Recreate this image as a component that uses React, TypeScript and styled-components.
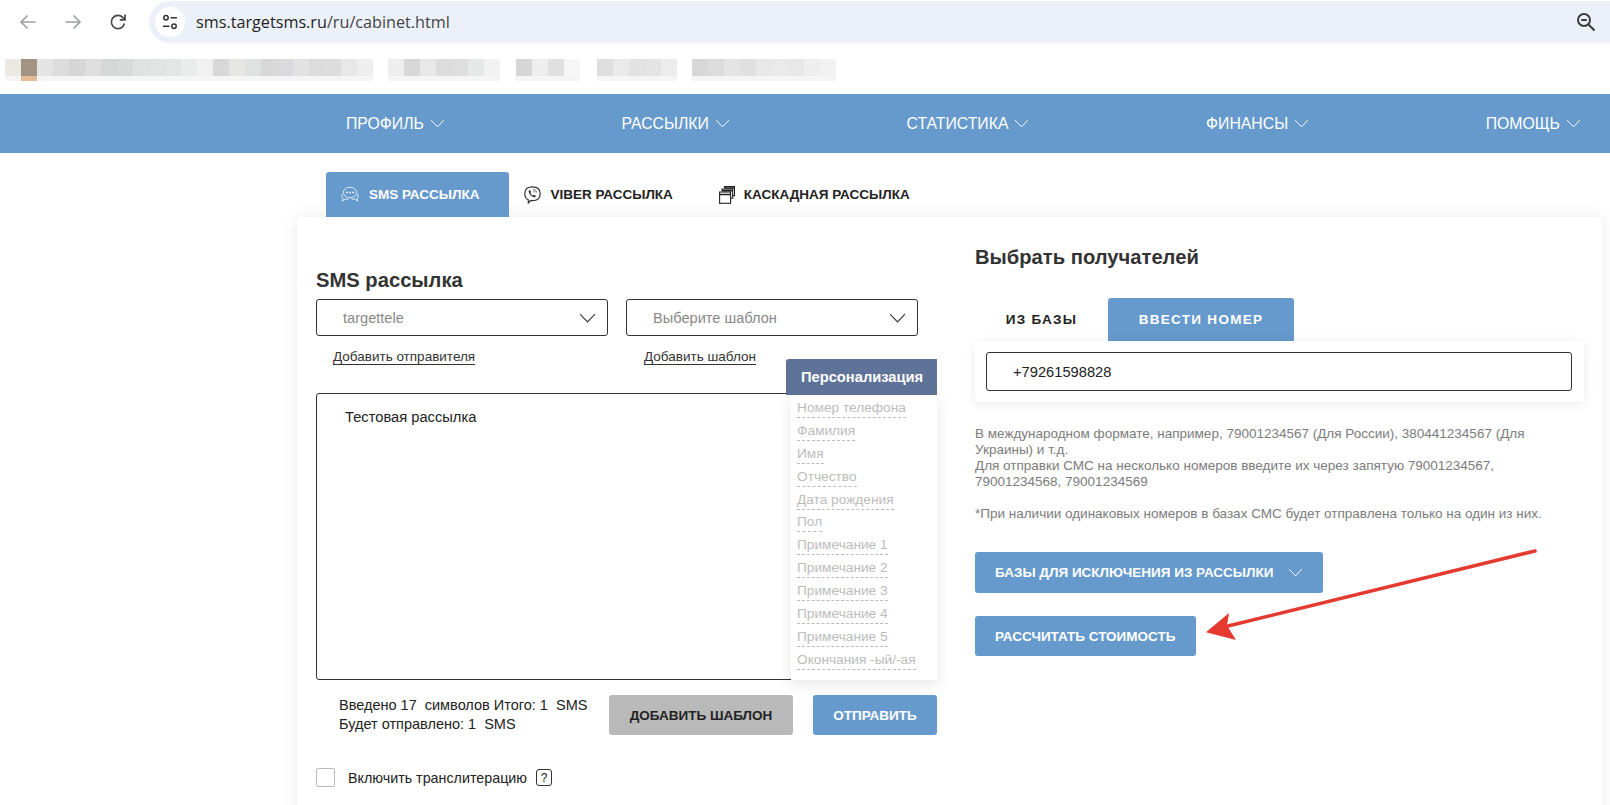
import React from "react";
import styled, {createGlobalStyle} from "styled-components";

const GlobalStyle = createGlobalStyle`
  html, body {
    margin: 0;
    padding: 0;
    height: 805px;
    overflow: hidden;
    background: #fff;
    font-family: "Liberation Sans", Arial, sans-serif;
    color: #333;
  }
  * { box-sizing: border-box; }
`;

const blurGroups = [
  {gap: 0, cells: ["#ece8e2", "#a39383", "#e4e4e4", "#dcdcdc", "#d6d6d6", "#dedede", "#d6d8d8", "#d8dada", "#e0e2e2", "#e2e4e4", "#e4e6e6", "#eaecec"]},
  {gap: 0, cells: ["#f1f1f1", "#d8d8d8", "#e6e6e4", "#e0e2e2", "#d8d8d8", "#dadade", "#e2e2e2", "#dcdcdc", "#dddddd", "#e8e8e8", "#eeeeee"]},
  {gap: 15, cells: ["#eeeeee", "#d8d8d8", "#e8e8e8", "#dcdcdc", "#dedede", "#e6e8e8", "#f2f2f2"]},
  {gap: 16, cells: ["#d6d6d6", "#eeeeee", "#e0e0e0", "#f6f6f6"]},
  {gap: 17, cells: ["#dedede", "#eaeaea", "#e2e2e2", "#e4e4e4", "#ececec"]},
  {gap: 15, cells: ["#d8d8d8", "#dcdcdc", "#e4e4e4", "#e0e0e0", "#e8e8e8", "#eaeaea", "#e8e8e8", "#eeeeee", "#f2f2f2"]},
];

const navItems = ["ПРОФИЛЬ", "РАССЫЛКИ", "СТАТИСТИКА", "ФИНАНСЫ", "ПОМОЩЬ"];

const personalFields = [
  "Номер телефона", "Фамилия", "Имя", "Отчество", "Дата рождения", "Пол",
  "Примечание 1", "Примечание 2", "Примечание 3", "Примечание 4", "Примечание 5",
  "Окончания -ый/-ая",
];

const Chevron = ({size = 15}: {size?: number}) => (
  <svg width={size} height={size * 0.6} viewBox="0 0 16 9.6" fill="none" stroke="currentColor" strokeWidth="1">
    <path d="M1 1l7 7.4L15 1"/>
  </svg>
);

const BackIcon = () => (
  <svg width="20" height="20" viewBox="0 0 20 20" fill="none" stroke="#9aa0a6" strokeWidth="1.6">
    <path d="M17.5 10H3M9.5 3.5L3 10l6.5 6.5"/>
  </svg>
);

const ForwardIcon = () => (
  <svg width="20" height="20" viewBox="0 0 20 20" fill="none" stroke="#9aa0a6" strokeWidth="1.6">
    <path d="M2.5 10H17M10.5 3.5L17 10l-6.5 6.5"/>
  </svg>
);

const ReloadIcon = () => (
  <svg width="20" height="20" viewBox="0 0 20 20" fill="none" stroke="#474747" strokeWidth="1.7">
    <path d="M16.4 11.5a6.6 6.6 0 1 1-1.5-5.900L17 7.700"/>
    <path d="M17 2.600v5.200h-5.200"/>
  </svg>
);

const TuneIcon = () => (
  <svg width="18" height="18" viewBox="0 0 18 18" fill="none" stroke="#333" strokeWidth="1.5">
    <circle cx="5" cy="4.800" r="2.200"/>
    <path d="M9.500 4.800H16M2 13.200h6.500"/>
    <circle cx="13" cy="13.200" r="2.200"/>
  </svg>
);

const ZoomOutIcon = () => (
  <svg width="20" height="20" viewBox="0 0 20 20" fill="none" stroke="#3c3c3c" strokeWidth="2">
    <circle cx="8" cy="8" r="6"/>
    <path d="M5.200 8h5.600M12.500 12.500l6 6"/>
  </svg>
);

const SmsIcon = () => (
  <svg width="18" height="17" viewBox="0 0 18 17" fill="none" stroke="#e8f0f8" strokeWidth="0.9">
    <path d="M1.900 7.800C.4 8.800.4 11.300 2 12.300l-.9 2.900 3.100-2.100c1.300.3 2.500.2 3.400-.2"/>
    <path d="M16.100 7.800c1.500 1 1.500 3.500-.1 4.500l.9 2.900-3.100-2.100c-1.300.3-2.500.2-3.400-.2"/>
    <ellipse cx="9" cy="6.500" rx="6.700" ry="5.300" fill="#6699cc"/>
    <circle cx="5.800" cy="6.500" r="1" fill="#e8f0f8" stroke="none"/>
    <circle cx="9" cy="6.500" r="1" fill="#e8f0f8" stroke="none"/>
    <circle cx="12.200" cy="6.500" r="1" fill="#e8f0f8" stroke="none"/>
  </svg>
);

const ViberIcon = () => (
  <svg width="17" height="18" viewBox="0 0 17 18" fill="none" stroke="#333" strokeWidth="1.2">
    <path d="M8.500 .8c4.500 0 7.700 1.700 7.700 6.900 0 5-3.200 6.900-7.700 6.900-.6 0-1.200 0-1.800-.1L4.300 17v-3.200C2 12.700.8 10.900.8 7.700.8 2.500 4 .8 8.500 .8z"/>
    <path d="M5.800 3.900l1.300 2-.7 1c.5 1.300 1.300 2.100 2.600 2.600l1-.8 2 1.300c-.3 1-1 1.400-1.800 1.300C7.300 10.800 5 8.500 4.600 5.600c0-.9.400-1.500 1.200-1.700z" fill="#333" stroke="none"/>
    <path d="M9.300 3.300c1.900.2 3 1.400 3.200 3.200M9.300 5c.8.100 1.300.6 1.400 1.400" strokeWidth="0.8"/>
  </svg>
);

const CascadeIcon = () => (
  <svg width="16" height="18" viewBox="0 0 16 18" fill="none" stroke="#222" strokeWidth="1.1">
    <path d="M5.500 2V.6h10v9h-1.800"/>
    <path d="M3 5V3h10.700v9.200H11.500"/>
    <rect x="0.600" y="6" width="11" height="11.300" fill="#fff"/>
    <path d="M.6 8.500h11M5.500 2h10M3 4.600h10.700" strokeWidth="1.700"/>
  </svg>
);

const Arrow = () => (
  <svg width="340" height="100" viewBox="0 0 340 100" fill="#e53a2f">
    <path d="M335 6L28 81" stroke="#e53a2f" strokeWidth="3.600" strokeLinecap="round"/>
    <path d="M6 87.300L29 68l-2 12.500L36 95z"/>
  </svg>
);

const App = () => (
  <Page>
    <GlobalStyle/>
    <Toolbar>
      <NavButton><BackIcon/></NavButton>
      <NavButton><ForwardIcon/></NavButton>
      <NavButton><ReloadIcon/></NavButton>
      <AddressBar>
        <TuneBadge><TuneIcon/></TuneBadge>
        <UrlText>sms.targetsms.ru<UrlPath>/ru/cabinet.html</UrlPath></UrlText>
        <ZoomButton><ZoomOutIcon/></ZoomButton>
      </AddressBar>
    </Toolbar>

    <BookmarkBar>
      {blurGroups.map((group, i) => (
        <BlurGroup key={i} $gap={group.gap}>
          {group.cells.map((color, j) => (
            <BlurCell key={j} $color={color} $under={color === "#a39383" ? "#e3bd96" : "#f5f5f5"}/>
          ))}
        </BlurGroup>
      ))}
    </BookmarkBar>

    <MainNav>
      {navItems.map(item => (
        <MainNavItem key={item}>{item}<Chevron/></MainNavItem>
      ))}
    </MainNav>

    <TabRow>
      <Tab $active><SmsIcon/>SMS РАССЫЛКА</Tab>
      <Tab><ViberIcon/>VIBER РАССЫЛКА</Tab>
      <Tab><CascadeIcon/>КАСКАДНАЯ РАССЫЛКА</Tab>
    </TabRow>

    <Card>
      <LeftColumn>
        <Title>SMS рассылка</Title>
        <SelectRow>
          <SelectBox><SelectValue>targettele</SelectValue><Chevron size={17}/></SelectBox>
          <SelectBox><SelectValue>Выберите шаблон</SelectValue><Chevron size={17}/></SelectBox>
        </SelectRow>
        <LinkRow>
          <ActionLink>Добавить отправителя</ActionLink>
          <ActionLink>Добавить шаблон</ActionLink>
        </LinkRow>
        <Editor>
          <MessageArea readOnly defaultValue="Тестовая рассылка"/>
          <PersonalPanel>
            <PersonalHeader>Персонализация</PersonalHeader>
            <PersonalList>
              {personalFields.map(field => <PersonalField key={field}>{field}</PersonalField>)}
            </PersonalList>
          </PersonalPanel>
        </Editor>
        <FooterRow>
          <Counter>
            <div>Введено 17&nbsp; символов Итого: 1&nbsp; SMS</div>
            <div>Будет отправлено: 1&nbsp; SMS</div>
          </Counter>
          <ActionButton $grey>ДОБАВИТЬ ШАБЛОН</ActionButton>
          <ActionButton>ОТПРАВИТЬ</ActionButton>
        </FooterRow>
        <TranslitRow>
          <CheckBox/>
          <span>Включить транслитерацию</span>
          <HelpMark>?</HelpMark>
        </TranslitRow>
      </LeftColumn>

      <RightColumn>
        <RightTitle>Выбрать получателей</RightTitle>
        <SourceTabs>
          <SourceTab>ИЗ БАЗЫ</SourceTab>
          <SourceTab $active>ВВЕСТИ НОМЕР</SourceTab>
        </SourceTabs>
        <PhonePanel>
          <PhoneInput readOnly value="+79261598828"/>
        </PhonePanel>
        <HelpText>
          В международном формате, например, 79001234567 (Для России), 380441234567 (Для Украины) и т.д.<br/>
          Для отправки СМС на несколько номеров введите их через запятую 79001234567, 79001234568, 79001234569<br/>
          <br/>
          *При наличии одинаковых номеров в базах СМС будет отправлена только на один из них.
        </HelpText>
        <ExcludeButton>БАЗЫ ДЛЯ ИСКЛЮЧЕНИЯ ИЗ РАССЫЛКИ<Chevron/></ExcludeButton>
        <PriceButton>РАССЧИТАТЬ СТОИМОСТЬ</PriceButton>
      </RightColumn>
    </Card>

    <ArrowLayer><Arrow/></ArrowLayer>
  </Page>
);

export default App;

const Page = styled.div`
  position: relative;
  width: 1610px;
  height: 805px;
  overflow: hidden;
  background: #fff;
`;

const Toolbar = styled.div`
  display: flex;
  align-items: center;
  height: 44px;
  padding: 1px 0 1px 18px;
`;

const NavButton = styled.div`
  display: flex;
  justify-content: center;
  align-items: center;
  width: 20px;
  height: 20px;
  margin-right: 25px;
`;

const AddressBar = styled.div`
  display: flex;
  align-items: center;
  flex: 1;
  height: 42px;
  margin-left: -4px;
  padding: 0 0 0 6px;
  background: #ecf1f9;
  border-radius: 21px 0 0 21px;
`;

const TuneBadge = styled.div`
  display: flex;
  justify-content: center;
  align-items: center;
  width: 30px;
  height: 30px;
  border-radius: 50%;
  background: #fff;
`;

const UrlText = styled.div`
  margin-left: 11px;
  font-family: "Open Sans", sans-serif;
  font-size: 16.200px;
  color: #1f1f1f;
`;

const UrlPath = styled.span`
  color: #444;
`;

const ZoomButton = styled.div`
  display: flex;
  margin-left: auto;
  margin-right: 14px;
`;

const BookmarkBar = styled.div`
  display: flex;
  align-items: flex-start;
  height: 50px;
  padding: 15px 0 0 5px;
  filter: blur(0.6px);
`;

const BlurGroup = styled.div<{$gap: number}>`
  display: flex;
  margin-left: ${p => p.$gap}px;
`;

const BlurCell = styled.div<{$color: string; $under: string}>`
  width: 16px;
  height: 22px;
  background: linear-gradient(${p => p.$color} 0 17px, ${p => p.$under} 17px);
`;

const MainNav = styled.nav`
  display: flex;
  justify-content: space-between;
  align-items: center;
  height: 59px;
  padding: 0 29px 0 346px;
  background: #6699cc;
`;

const MainNavItem = styled.div`
  display: flex;
  align-items: center;
  gap: 6px;
  font-size: 15.800px;
  color: #fff;
`;

const TabRow = styled.div`
  display: flex;
  align-items: flex-end;
  height: 64px;
  padding-left: 326px;
`;

const Tab = styled.div<{$active?: boolean}>`
  display: flex;
  align-items: center;
  gap: ${p => p.$active ? "10px" : "9px"};
  height: 45px;
  padding: 0 ${p => p.$active ? "30px" : "31px"} 0 15px;
  border-radius: 3px 3px 0 0;
  background: ${p => p.$active ? "#6699cc" : "transparent"};
  color: ${p => p.$active ? "#fff" : "#222"};
  font-size: 13.500px;
  font-weight: 700;
`;

const Card = styled.div`
  display: grid;
  grid-template-columns: 621px 609px;
  column-gap: 38px;
  height: 620px;
  margin: 0 8px 0 297px;
  padding: 0 18px 0 19px;
  border-radius: 4px;
  background: #fff;
  box-shadow: 0 0 16px rgba(0, 0, 0, 0.09);
`;

const LeftColumn = styled.div`
  padding-top: 51px;
`;

const Title = styled.h2`
  margin: 0;
  font-size: 20.200px;
  line-height: 24px;
  font-weight: 700;
  color: #333;
`;

const SelectRow = styled.div`
  display: grid;
  grid-template-columns: 292px 292px;
  column-gap: 18px;
  margin-top: 7px;
`;

const SelectBox = styled.div`
  display: flex;
  justify-content: space-between;
  align-items: center;
  height: 37px;
  padding: 1px 11px 0 26px;
  border: 1px solid #333;
  border-radius: 3px;
  color: #333;
`;

const SelectValue = styled.span`
  font-size: 14.600px;
  color: #888;
`;

const LinkRow = styled.div`
  display: grid;
  grid-template-columns: 311px 1fr;
  height: 19px;
  margin-top: 13px;
  padding-left: 17px;
`;

const ActionLink = styled.a`
  justify-self: start;
  height: 16px;
  font-size: 13.500px;
  line-height: 15px;
  color: #333;
  border-bottom: 1px solid #333;
`;

const Editor = styled.div`
  position: relative;
  margin-top: 25px;
`;

const MessageArea = styled.textarea`
  display: block;
  width: 100%;
  height: 287px;
  padding: 15px 28px;
  border: 1px solid #333;
  border-radius: 3px;
  outline: none;
  resize: none;
  font-family: "Liberation Sans", Arial, sans-serif;
  font-size: 14.700px;
  color: #222;
`;

const PersonalPanel = styled.div`
  position: absolute;
  top: -34px;
  right: 0;
  width: 151px;
`;

const PersonalHeader = styled.div`
  height: 36px;
  padding-left: 15px;
  border-radius: 3px 0 0 0;
  background: #5f7398;
  color: #fff;
  font-size: 14.700px;
  font-weight: 700;
  line-height: 36px;
  white-space: nowrap;
`;

const PersonalList = styled.div`
  display: flex;
  flex-direction: column;
  align-items: flex-start;
  height: 285px;
  margin-left: 5px;
  padding: 3px 0 0 6px;
  background: #fff;
  box-shadow: 0 4px 14px rgba(0, 0, 0, 0.1);
`;

const PersonalField = styled.span`
  height: 20px;
  margin-bottom: 2.900px;
  font-size: 13.700px;
  line-height: 19px;
  color: #bcbcbc;
  border-bottom: 1px dashed #bbb;
`;

const FooterRow = styled.div`
  display: flex;
  align-items: center;
  margin-top: 15px;
`;

const Counter = styled.div`
  flex: 1;
  padding-left: 23px;
  font-size: 14.500px;
  line-height: 19px;
  color: #222;
`;

const ActionButton = styled.div<{$grey?: boolean}>`
  display: flex;
  justify-content: center;
  align-items: center;
  height: 40px;
  width: ${p => p.$grey ? "184px" : "124px"};
  margin-left: 20px;
  border-radius: 3px;
  background: ${p => p.$grey ? "#b9b9b9" : "#6699cc"};
  color: ${p => p.$grey ? "#222" : "#fff"};
  font-size: 13.500px;
  font-weight: 700;
`;

const TranslitRow = styled.div`
  display: flex;
  align-items: center;
  margin-top: 33px;
  font-size: 14.300px;
  color: #222;
`;

const CheckBox = styled.div`
  width: 19px;
  height: 19px;
  margin-right: 13px;
  border: 1px solid #bbb;
  border-radius: 2px;
`;

const HelpMark = styled.span`
  display: flex;
  justify-content: center;
  align-items: center;
  width: 16px;
  height: 17px;
  margin-left: 9px;
  border: 1px solid #333;
  border-radius: 3px;
  font-size: 12px;
`;

const RightColumn = styled.div`
  display: flex;
  flex-direction: column;
  align-items: flex-start;
  padding-top: 28px;
`;

const RightTitle = styled.h2`
  margin: 0;
  font-size: 20.200px;
  line-height: 24px;
  font-weight: 700;
  color: #333;
`;

const SourceTabs = styled.div`
  display: flex;
  margin-top: 29px;
`;

const SourceTab = styled.div<{$active?: boolean}>`
  display: flex;
  justify-content: center;
  align-items: center;
  width: ${p => p.$active ? "186px" : "133px"};
  height: 43px;
  border-radius: 3px 3px 0 0;
  background: ${p => p.$active ? "#6699cc" : "transparent"};
  color: ${p => p.$active ? "#fff" : "#222"};
  font-size: 13.500px;
  font-weight: 700;
  letter-spacing: 1.300px;
`;

const PhonePanel = styled.div`
  width: 100%;
  height: 61px;
  padding: 11px 12px 11px 11px;
  border-radius: 3px;
  background: #fff;
  box-shadow: 0 2px 12px rgba(0, 0, 0, 0.09);
`;

const PhoneInput = styled.input`
  display: block;
  width: 100%;
  height: 39px;
  padding: 0 26px;
  border: 1px solid #333;
  border-radius: 3px;
  outline: none;
  font-family: "Liberation Sans", Arial, sans-serif;
  font-size: 14.700px;
  color: #222;
`;

const HelpText = styled.p`
  width: 575px;
  margin: 24px 0 0;
  font-size: 13.500px;
  line-height: 16px;
  color: #7c7c7c;
`;

const BlueButton = styled.div`
  display: flex;
  align-items: center;
  border-radius: 3px;
  background: #6699cc;
  color: #fff;
  font-size: 13.500px;
  font-weight: 700;
`;

const ExcludeButton = styled(BlueButton)`
  gap: 15px;
  width: 348px;
  height: 41px;
  margin-top: 30px;
  padding-left: 20px;
`;

const PriceButton = styled(BlueButton)`
  width: 221px;
  height: 40px;
  margin-top: 23px;
  padding-left: 20px;
`;

const ArrowLayer = styled.div`
  position: absolute;
  left: 1200px;
  top: 545px;
  display: flex;
`;
